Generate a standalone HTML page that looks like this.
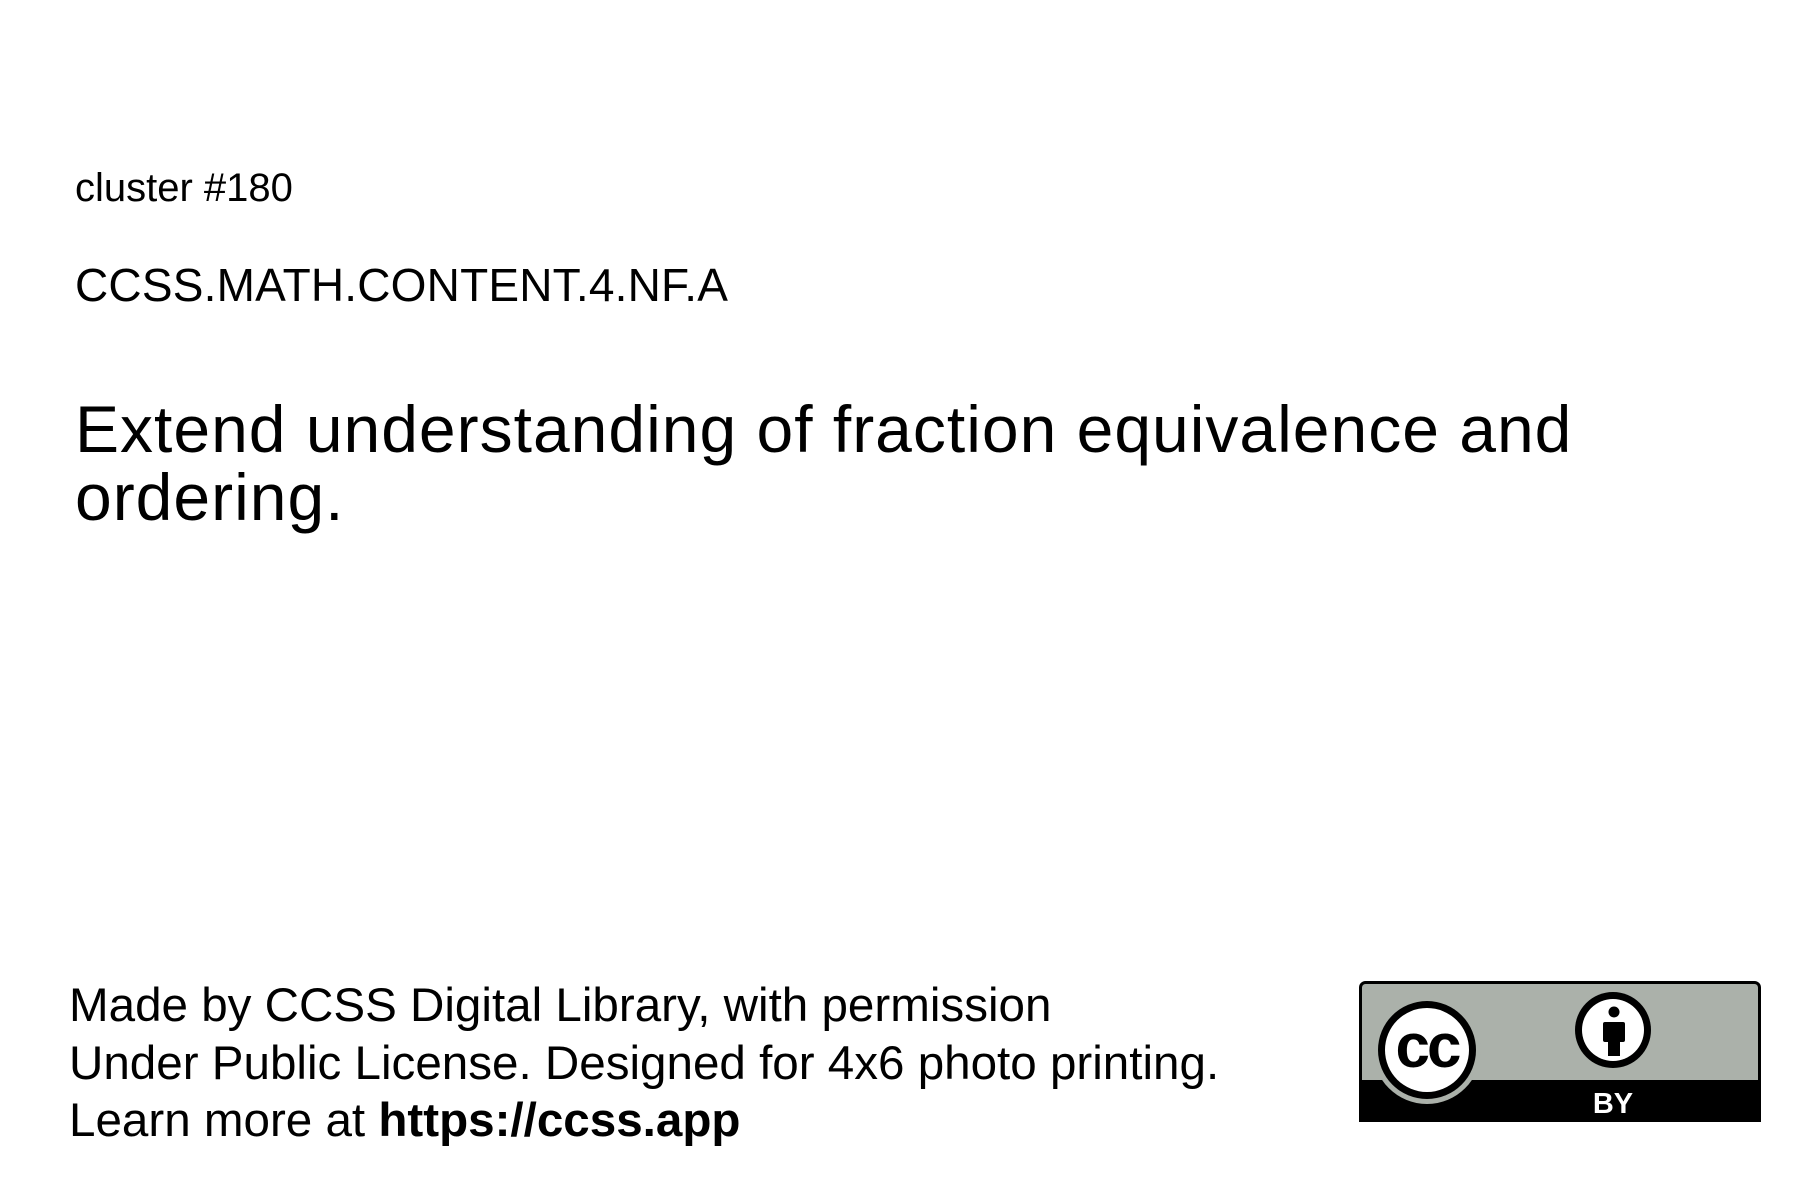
<!DOCTYPE html>
<html><head><meta charset="utf-8"><style>
html,body{margin:0;padding:0;background:#fff;}
body{width:1800px;height:1200px;position:relative;overflow:hidden;font-family:"Liberation Sans",sans-serif;color:#000;}
.t{position:absolute;white-space:nowrap;}
</style></head><body>
<div class="t" style="left:75px;top:168px;font-size:40px;line-height:40px;">cluster #180</div>
<div class="t" style="left:75px;top:262px;font-size:46px;line-height:46px;letter-spacing:0.2px;">CCSS.MATH.CONTENT.4.NF.A</div>
<div class="t" style="left:75px;top:395px;font-size:66px;line-height:68px;letter-spacing:1px;">Extend understanding of fraction equivalence and<br>ordering.</div>
<div class="t" style="left:69px;top:976px;font-size:47px;line-height:57.5px;transform:scaleX(1.012);transform-origin:0 0;">Made by CCSS Digital Library, with permission<br>Under Public License. Designed for 4x6 photo printing.<br>Learn more at <b>https://ccss.app</b></div>
<svg style="position:absolute;left:1359px;top:981px" width="402" height="141" viewBox="0 0 402 141">
<rect x="1.5" y="1.5" width="399" height="138" rx="5" fill="#abb1aa" stroke="#000" stroke-width="3"/>
<rect x="0" y="99" width="402" height="42" fill="#000"/>
<circle cx="68" cy="69" r="54" fill="#abb1aa"/>
<circle cx="68" cy="69" r="49" fill="#000"/>
<circle cx="68" cy="69" r="42" fill="#fff"/>
<text x="68" y="86" text-anchor="middle" font-family="Liberation Sans" font-weight="bold" font-size="62" letter-spacing="-3" fill="#000">cc</text>
<circle cx="254" cy="49" r="38" fill="#000"/>
<circle cx="254" cy="49" r="31" fill="#fff"/>
<circle cx="255" cy="31" r="5.5" fill="#000"/>
<rect x="244" y="41" width="22" height="20" rx="2" fill="#000"/>
<rect x="249" y="55" width="12" height="20" fill="#000"/>
<text x="254" y="132" text-anchor="middle" font-family="Liberation Sans" font-weight="bold" font-size="29" fill="#fff">BY</text>
</svg>
</body></html>
